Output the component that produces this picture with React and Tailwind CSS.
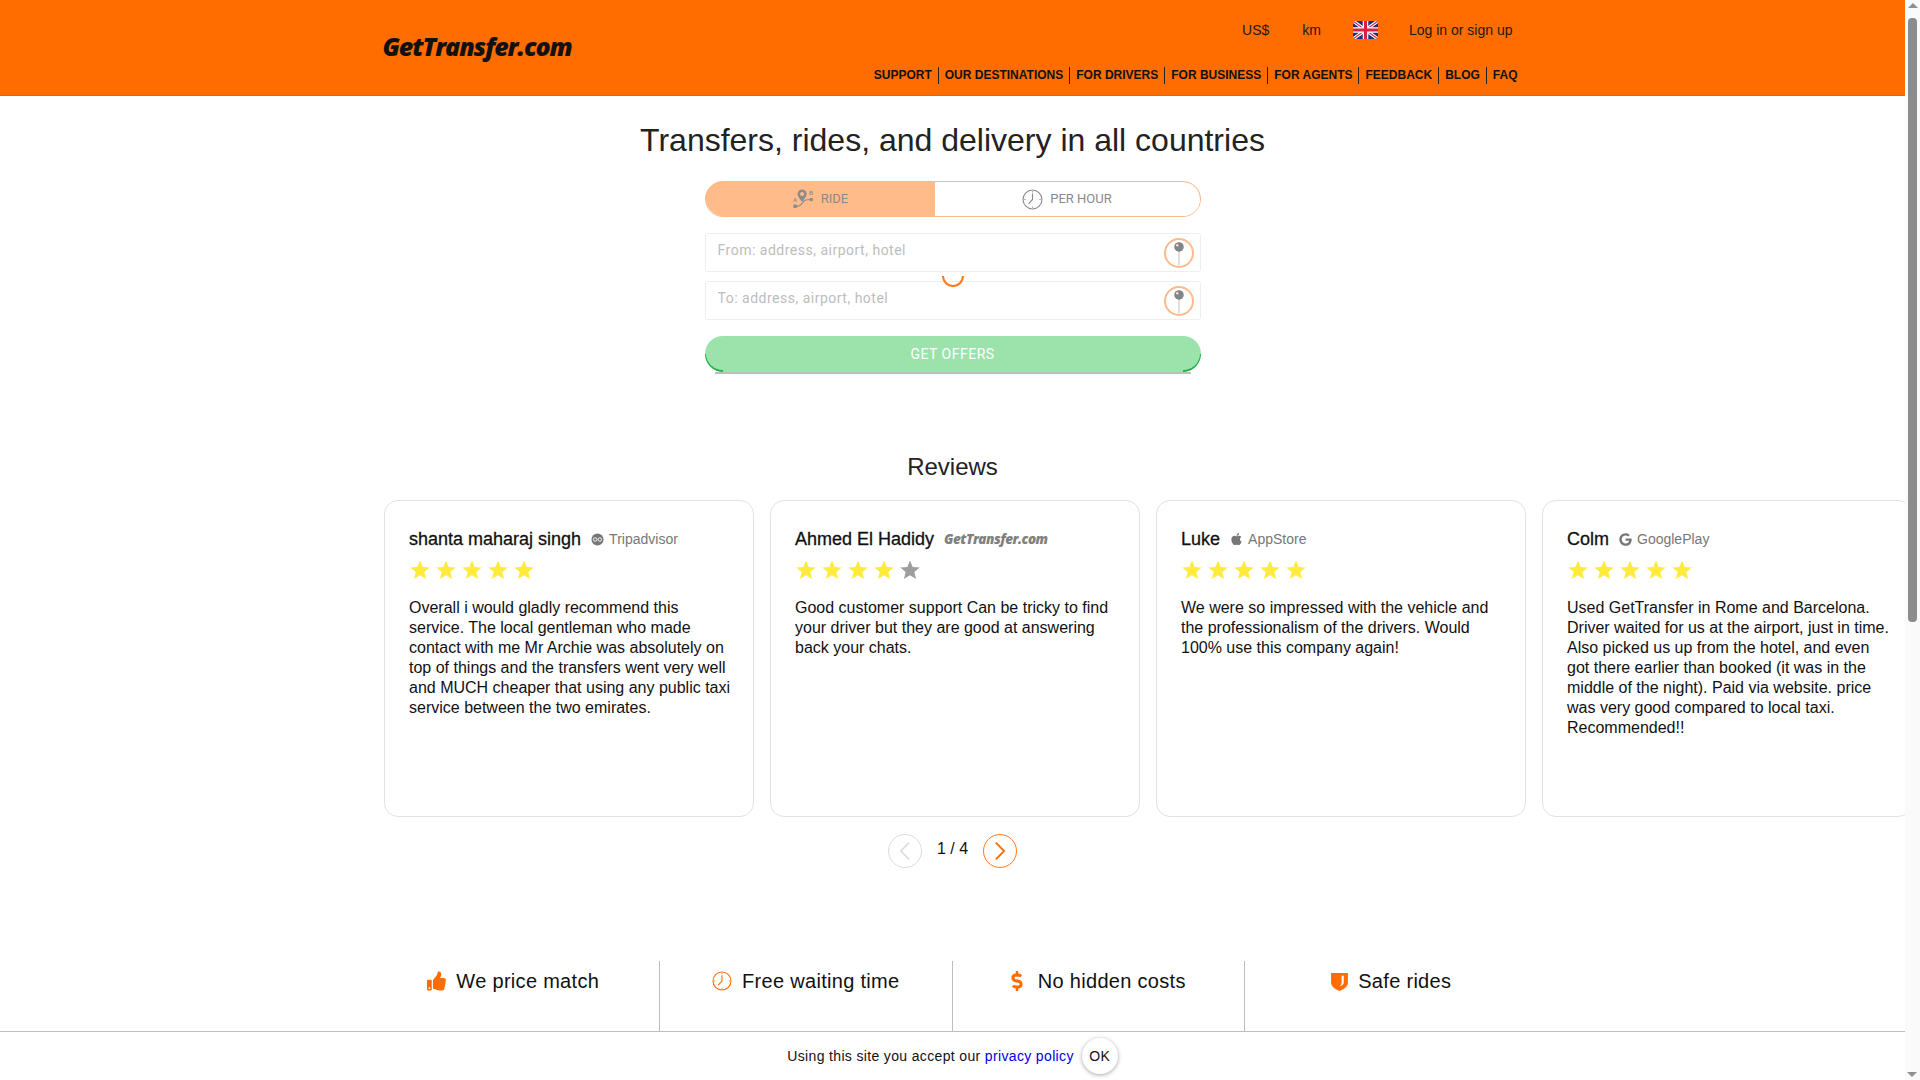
import { FaApple, FaDollarSign, FaGoogle, FaThumbsUp } from "react-icons/fa";

const NAV = [
  "SUPPORT",
  "OUR DESTINATIONS",
  "FOR DRIVERS",
  "FOR BUSINESS",
  "FOR AGENTS",
  "FEEDBACK",
  "BLOG",
  "FAQ",
];

const REVIEWS = [
  {
    name: "shanta maharaj singh",
    source: "tripadvisor",
    stars: 5,
    text: "Overall i would gladly recommend this service. The local gentleman who made contact with me Mr Archie was absolutely on top of things and the transfers went very well and MUCH cheaper that using any public taxi service between the two emirates.",
  },
  {
    name: "Ahmed El Hadidy",
    source: "gettransfer",
    stars: 4,
    text: "Good customer support Can be tricky to find your driver but they are good at answering back your chats.",
  },
  {
    name: "Luke",
    source: "appstore",
    stars: 5,
    text: "We were so impressed with the vehicle and the professionalism of the drivers. Would 100% use this company again!",
  },
  {
    name: "Colm",
    source: "googleplay",
    stars: 5,
    text: "Used GetTransfer in Rome and Barcelona. Driver waited for us at the airport, just in time. Also picked us up from the hotel, and even got there earlier than booked (it was in the middle of the night). Paid via website. price was very good compared to local taxi. Recommended!!",
  },
];

function Logo({ className }) {
  return (
    <span className={`font-['Open_Sans',sans-serif] font-extrabold italic ${className}`}>
      GetTransfer.com
    </span>
  );
}

function FlagUk() {
  return (
    <svg viewBox="0 0 25 18" className="h-[18px] w-[25px] rounded-[3px]">
      <rect width="25" height="18" fill="#1f2f6e" />
      <path d="M0 0L25 18M25 0L0 18" stroke="#fff" strokeWidth="3.4" />
      <path d="M0 0L25 18M25 0L0 18" stroke="#d8213f" strokeWidth="1.1" />
      <path d="M12.5 0V18M0 9H25" stroke="#fff" strokeWidth="5.6" />
      <path d="M12.5 0V18M0 9H25" stroke="#d8213f" strokeWidth="3.2" />
    </svg>
  );
}

function RouteIcon() {
  return (
    <svg viewBox="0 0 24 24" className="h-[22px] w-[22px]" fill="#8c8c8c">
      <path d="M11 1.5a5 5 0 0 0-5 5c0 3.4 5 8.5 5 8.5s5-5.100 5-8.500a5 5 0 0 0-5-5zm0 2.800a2.200 2.200 0 1 1 0 4.400 2.200 2.200 0 0 1 0-4.400z" />
      <circle cx="3.500" cy="20" r="2.200" />
      <circle cx="21" cy="12.500" r="2" />
      <path d="M3.500 20c5 0 6-1 8-4s4-3.500 9.500-3.500" fill="none" stroke="#8c8c8c" strokeWidth="1.200" />
      <text x="1" y="15" fontSize="6" fontWeight="700" fontFamily="Liberation Sans, sans-serif">A</text>
      <text x="18.500" y="8" fontSize="6" fontWeight="700" fontFamily="Liberation Sans, sans-serif">B</text>
    </svg>
  );
}

function ClockIcon({ color, className }) {
  return (
    <svg viewBox="0 0 24 24" className={className} fill="none" stroke={color}>
      <circle cx="12" cy="12" r="10.800" strokeWidth="1.300" />
      <path d="M12 5v7l-4.500 5" strokeWidth="1.300" />
      <path d="M12 2.500v1.500M12 20v1.500M2.500 12H4M20 12h1.500" strokeWidth="1" />
    </svg>
  );
}

function PinButton() {
  return (
    <span className="flex h-[30px] w-[30px] items-center justify-center rounded-full border-2 border-[#ffb98a] bg-white">
      <svg viewBox="0 0 24 30" className="h-[26px] w-[22px]">
        <path d="M12 12v17" stroke="#b5b5b5" strokeWidth="1" />
        <circle cx="12" cy="8" r="5.500" fill="#858585" />
        <circle cx="10" cy="6" r="1.400" fill="#e8e8e8" />
      </svg>
    </span>
  );
}

function Star({ on }) {
  return (
    <svg viewBox="0 0 20 20" className="h-5 w-5" fill={on ? "#ffeb3b" : "#9e9e9e"}>
      <path d="M10 0.500l2.700 6.600 7.100 0.500-5.500 4.500 1.800 7-6.100-3.800-6.100 3.800 1.800-7L0.200 7.600l7.100-0.500z" />
    </svg>
  );
}

function Source({ type }) {
  if (type === "tripadvisor") {
    return (
      <span className="flex items-center gap-[5px] text-[14px] text-[#777]">
        <svg viewBox="0 0 14 14" className="h-[13px] w-[13px]">
          <circle cx="7" cy="7" r="6.500" fill="#777" />
          <circle cx="4.500" cy="7" r="1.900" fill="none" stroke="#fff" />
          <circle cx="9.500" cy="7" r="1.900" fill="none" stroke="#fff" />
        </svg>
        Tripadvisor
      </span>
    );
  }
  if (type === "gettransfer") {
    return <Logo className="text-[13.5px] tracking-[-0.5px] text-[#808080]" />;
  }
  if (type === "appstore") {
    return (
      <span className="flex items-center gap-[5px] text-[14px] text-[#777]">
        <FaApple className="h-[14px] w-[13px]" />
        AppStore
      </span>
    );
  }
  return (
    <span className="flex items-center gap-[5px] text-[14px] text-[#777]">
      <FaGoogle className="h-[13px] w-[13px]" />
      GooglePlay
    </span>
  );
}

function ReviewCard({ review }) {
  return (
    <div className="h-[317px] w-[370px] shrink-0 rounded-[14px] border border-[#e2e2e2] bg-white px-[24px] pt-[20px]">
      <div className="flex h-[22px] items-center gap-[10px] mt-[7px]">
        <span className="text-[18px] font-bold text-[#111] [font-weight:500] [-webkit-text-stroke:0.3px_#111]">
          {review.name}
        </span>
        <Source type={review.source} />
      </div>
      <div className="mt-[10px] flex gap-[6px] pl-[1px]">
        {[0, 1, 2, 3, 4].map((i) => (
          <Star key={i} on={i < review.stars} />
        ))}
      </div>
      <p className="mt-[18px] w-[322px] text-[16px] leading-[20px] text-[#111]">{review.text}</p>
    </div>
  );
}

function Feature({ icon, title, last }) {
  return (
    <div
      className={`flex h-[90px] w-[292.5px] items-start justify-center ${
        last ? "" : "border-r border-[#bdbdbd]"
      }`}
    >
      <div className="flex h-10 items-center gap-[10px] text-[20px] tracking-[0.3px] text-[#111]">
        {icon}
        {title}
      </div>
    </div>
  );
}

export default function App() {
  return (
    <div className="relative flex h-screen w-screen overflow-hidden bg-white font-['Liberation_Sans',sans-serif]">
      <div className="relative h-full min-w-0 flex-1 overflow-hidden">
        <header className="h-[96px] border-b border-[#e0660a] bg-[#ff6d00]">
          <div className="mx-auto flex h-full w-[1170px] justify-between pl-[15px] pr-[20px]">
            <Logo className="mt-[29px] text-[25px] leading-[34px] tracking-[-1.1px] text-[#111]" />
            <div className="flex flex-col items-end">
              <div className="mt-[20px] flex h-5 items-center pr-[5px] text-[14px] text-[#1a1a1a]">
                <span>US$</span>
                <span className="ml-[33px]">km</span>
                <span className="ml-[32px] flex"><FlagUk /></span>
                <span className="ml-[31px]">Log in or sign up</span>
              </div>
              <nav className="mt-[27px] flex h-[17px] items-center text-[12px] font-bold text-[#111]">
                {NAV.map((item, i) => (
                  <span
                    key={item}
                    className={`px-[6px] leading-[17px] last:pr-0 ${
                      i < NAV.length - 1 ? "border-r border-[#222]" : ""
                    }`}
                  >
                    {item}
                  </span>
                ))}
              </nav>
            </div>
          </div>
        </header>

        <h1 className="mt-[26px] text-center text-[32px] leading-[36px] text-[#222]">
          Transfers, rides, and delivery in all countries
        </h1>

        <div className="relative mx-auto mt-[23px] w-[496px]">
          <div className="relative flex h-9 overflow-hidden rounded-[18px] border border-[#ffb98a] font-['Roboto',sans-serif] text-[13px] text-[#8a8a8a]">
            <div className="flex w-[229px] items-center justify-center gap-[7px] bg-[#ffbb8a]">
              <RouteIcon />
              RIDE
            </div>
            <div className="flex flex-1 items-center justify-center gap-[7px] bg-white">
              <ClockIcon color="#8c8c8c" className="h-[21px] w-[21px]" />
              PER HOUR
            </div>
            <span className="absolute -left-px -top-px h-[18px] w-[18px] rounded-tl-[18px] border-l border-t border-[#ff6d00]" />
            <span className="absolute -right-px -top-px h-[18px] w-[18px] rounded-tr-[18px] border-r border-t border-[#ff6d00]" />
          </div>

          <div className="relative mt-[16px] flex h-[39px] items-center rounded-[3px] border border-[#eee] bg-white pl-3 pr-[6px]">
            <input
              readOnly
              placeholder="From: address, airport, hotel"
              className="mb-1 min-w-0 flex-1 bg-transparent font-['Roboto',sans-serif] text-[14px] tracking-[0.5px] outline-none placeholder:text-[#bdbdbd]"
            />
            <PinButton />
          </div>
          <div className="relative mt-[9px] flex h-[39px] items-center rounded-[3px] border border-[#eee] bg-white pl-3 pr-[6px]">
            <input
              readOnly
              placeholder="To: address, airport, hotel"
              className="mb-1 min-w-0 flex-1 bg-transparent font-['Roboto',sans-serif] text-[14px] tracking-[0.5px] outline-none placeholder:text-[#bdbdbd]"
            />
            <PinButton />
          </div>

          {/* spinner sits over the gap between the two inputs */}
          <svg viewBox="0 0 24 24" className="absolute left-[236px] top-[84px] h-6 w-6" fill="none">
            <path d="M2 11a10 10 0 0 0 20 0" stroke="#ff7a1a" strokeWidth="2" />
          </svg>

          <div className="relative mt-[16px] flex h-9 items-center justify-center overflow-hidden rounded-[18px] bg-[#9be3ab] font-['Roboto',sans-serif] text-[14px] tracking-[0.5px] text-white">
            GET OFFERS
            <span className="absolute bottom-0 left-0 h-[18px] w-[18px] rounded-bl-[18px] border-b-2 border-l border-[#22b14c]" />
            <span className="absolute bottom-0 right-0 h-[18px] w-[18px] rounded-br-[18px] border-b-2 border-r border-[#22b14c]" />
          </div>
          <div className="mx-[10px] h-[2px] bg-[#bdbdbd]" />
        </div>

        <h2 className="mt-[79px] text-center text-[24px] leading-[28px] text-[#222]">Reviews</h2>

        <div className="mt-[19px] flex gap-[16px] pl-[384px]">
          {REVIEWS.map((review) => (
            <ReviewCard key={review.name} review={review} />
          ))}
        </div>

        <div className="mt-[17px] flex items-center justify-center">
          <span className="flex h-[34px] w-[34px] items-center justify-center rounded-full border border-[#dcdcdc]">
            <svg viewBox="0 0 14 24" className="h-[20px] w-[12px]" fill="none" stroke="#dcdcdc" strokeWidth="2">
              <path d="M12 2L2 12l10 10" />
            </svg>
          </span>
          <span className="w-[61px] pb-1 text-center text-[16px] text-[#111]">1 / 4</span>
          <span className="flex h-[34px] w-[34px] items-center justify-center rounded-full border border-[#ff7a1a]">
            <svg viewBox="0 0 14 24" className="h-[20px] w-[12px]" fill="none" stroke="#ff6d00" strokeWidth="2.200">
              <path d="M2 2l10 10L2 22" />
            </svg>
          </span>
        </div>

        <div className="mx-auto mt-[93px] flex w-[1170px]">
          <Feature
            title="We price match"
            icon={<FaThumbsUp className="h-[20px] w-[19px] text-[#ff6d00]" />}
          />
          <Feature
            title="Free waiting time"
            icon={<ClockIcon color="#ff6d00" className="h-[20px] w-[20px]" />}
          />
          <Feature
            title="No hidden costs"
            icon={<FaDollarSign className="mr-[5px] h-[20px] w-[12px] text-[#ff6d00]" />}
          />
          <Feature
            last
            title="Safe rides"
            icon={
              <svg viewBox="0 0 16 18" className="h-[19px] w-[17px]">
                <path
                  fillRule="evenodd"
                  fill="#ff6d00"
                  d="M0 1h16v9c0 4-4 6.500-8 8-4-1.500-8-4-8-8zM10 3.500v6.500c0 1.800-1 3-2 3.800 2.500-1 4-2.300 4-3.800V3.500z"
                />
              </svg>
            }
          />
        </div>

        <div className="absolute bottom-0 left-0 right-0 flex h-[49px] items-center justify-center gap-[8px] border-t border-[#bdbdbd] bg-white text-[14px] tracking-[0.35px] text-[#111]">
          <span>
            Using this site you accept our <span className="text-[#0000e0]">privacy policy</span>
          </span>
          <span className="flex h-9 w-9 items-center justify-center rounded-full bg-white text-[14px] shadow-[0_1px_4px_rgba(0,0,0,0.35)]">
            OK
          </span>
        </div>
      </div>

      {/* scrollbar */}
      <div className="relative h-full w-[15px] shrink-0 bg-[#fafafa]">
        <div className="mx-auto mt-[3px] h-0 w-0 border-x-[5px] border-b-[5px] border-x-transparent border-b-[#909090]" />
        <div className="mx-[3px] mt-[10px] h-[604px] rounded-[4px] bg-[#8c8c8c]" />
        <div className="absolute bottom-[3px] left-[2px] h-0 w-0 border-x-[5px] border-t-[5px] border-x-transparent border-t-[#909090]" />
      </div>
    </div>
  );
}
